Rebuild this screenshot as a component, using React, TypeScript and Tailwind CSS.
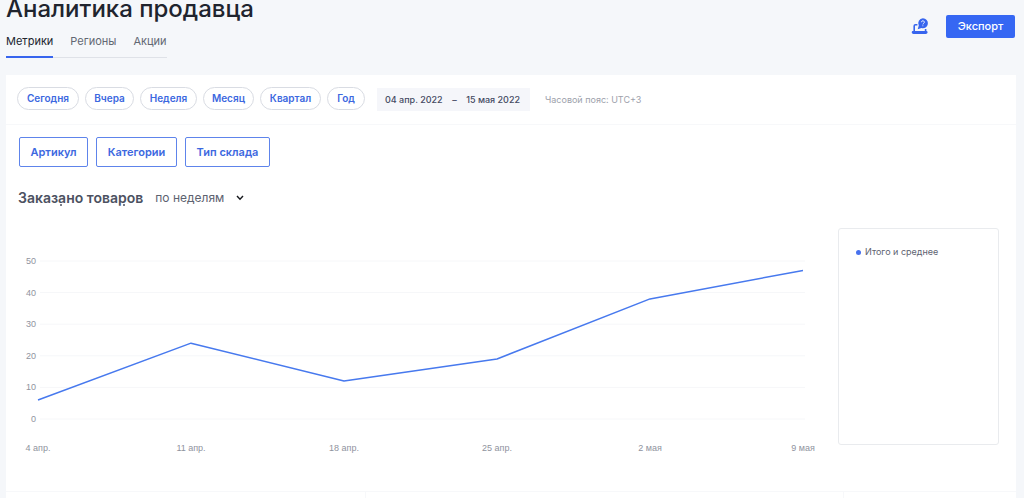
import React from "react";

const tabs = ["Метрики", "Регионы", "Акции"];
const periods = [
  { label: "Сегодня", width: "w-[62px]" },
  { label: "Вчера", width: "w-[49px]" },
  { label: "Неделя", width: "w-[57px]" },
  { label: "Месяц", width: "w-[51px]" },
  { label: "Квартал", width: "w-[61px]" },
  { label: "Год", width: "w-[38px]" },
];
const filters = [
  { label: "Артикул", width: "w-[69px]" },
  { label: "Категории", width: "w-[81px]" },
  { label: "Тип склада", width: "w-[85px]" },
];
const points = [
  { label: "4 апр.", value: 6 },
  { label: "11 апр.", value: 24 },
  { label: "18 апр.", value: 12 },
  { label: "25 апр.", value: 19 },
  { label: "2 мая", value: 38 },
  { label: "9 мая", value: 47 },
];
const ticks = [50, 40, 30, 20, 10, 0];

const xAt = (i: number) => 20 + i * 153;
const yAt = (v: number) => 191 - v * 3.16;

function OrdersChart() {
  return (
    <svg
      viewBox="0 0 802 230"
      className="block w-full font-['Liberation_Sans',sans-serif]"
      role="img"
      aria-label="Заказано товаров по неделям"
    >
      {ticks.map((t) => (
        <g key={t}>
          <line x1="22" x2="787" y1={yAt(t)} y2={yAt(t)} stroke="#f6f7f9" strokeWidth="1" />
          <text x="18" y={yAt(t) + 3} textAnchor="end" fontSize="9" fill="#8f939e">
            {t}
          </text>
        </g>
      ))}
      <polyline
        points={points.map((p, i) => `${xAt(i)},${yAt(p.value)}`).join(" ")}
        fill="none"
        stroke="#4779ee"
        strokeWidth="1.5"
        strokeLinejoin="round"
      />
      {points.map((p, i) => (
        <text key={p.label} x={xAt(i)} y="223" textAnchor="middle" fontSize="9" fill="#8f939e">
          {p.label}
        </text>
      ))}
    </svg>
  );
}

function SupportIcon() {
  return (
    <svg viewBox="0 0 18 18" className="size-[18px]" fill="none" aria-hidden="true">
      <path d="M6.400 6.800H4.400Q3.200 6.800 3.200 8v5.500M14.600 11v3" stroke="#3765ee" strokeWidth="1.600" />
      <path d="M1.600 13h13.800q1.100 0 1.100 1v.3q0 1.700-1.700 1.700H2.400Q.8 16 .8 14.300V14q0-1 .8-1Z" fill="#3765ee" />
      <path d="M11.900.3a5 5 0 1 1-1.400 9.800L6.700 11.300l1.100-3.700A5 5 0 0 1 11.900.3Z" fill="#3765ee" />
      <path d="M10.500 4.200a1.400 1.400 0 1 1 2.100 1.200q-.7.4-.7 1" stroke="#fff" strokeWidth=".9" />
      <circle cx="11.900" cy="7.700" r=".5" fill="#fff" />
    </svg>
  );
}

export default function App() {
  return (
    <div className="min-h-screen overflow-hidden bg-[#f5f7fa] px-1.5 font-['Inter','Liberation_Sans',sans-serif] text-[#20242e]">
      <header className="flex h-[75px] items-start justify-between pr-[3px]">
        <div>
          <h1 className="text-2xl font-medium leading-[18px]">Аналитика продавца</h1>
          <nav className="mt-3 flex w-fit gap-[17px] border-b border-[#dfe2e8] text-[11px] leading-4">
            {tabs.map((tab, i) => (
              <a
                key={tab}
                href="#"
                aria-current={i === 0 ? "page" : undefined}
                className={
                  i === 0
                    ? "-mb-px border-b-2 border-[#3765ee] pb-[7px] pt-[3px] text-[#20242e]"
                    : "pb-2 pt-[3px] text-[#626773]"
                }
              >
                {tab}
              </a>
            ))}
          </nav>
        </div>
        <div className="flex items-center gap-[17px] pt-[15px]">
          <button aria-label="Помощь">
            <SupportIcon />
          </button>
          <button className="h-[23px] w-[69px] rounded-[2px] bg-[#3667f3] text-[11px] font-medium text-white">
            Экспорт
          </button>
        </div>
      </header>

      <main className="mr-0.5 bg-white">
        <section className="flex h-[50px] items-center border-b border-[#f7f8fa] pl-[11px]">
          <div className="flex gap-1.5 pb-0.5">
            {periods.map((p) => (
              <button
                key={p.label}
                className={`${p.width} h-[23px] rounded-full border border-[#d9dce3] text-[10px] font-semibold text-[#3c68e0]`}
              >
                {p.label}
              </button>
            ))}
          </div>
          <button className="ml-3 flex h-[23px] w-[153px] items-center justify-between bg-[#f5f6fa] pl-2 pr-2.5 text-[9px] font-medium text-[#444a62]">
            <span>04 апр. 2022</span>
            <span>–</span>
            <span>15 мая 2022</span>
          </button>
          <span className="ml-[15px] text-[9px] text-[#9da1ab]">Часовой пояс: UTC+3</span>
        </section>

        <section className="flex gap-2 pl-[13px] pt-3">
          {filters.map((f) => (
            <button
              key={f.label}
              className={`${f.width} h-[30px] rounded-[2px] border border-[#5e84eb] text-[11px] font-semibold text-[#3c68e0]`}
            >
              {f.label}
            </button>
          ))}
        </section>

        <section className="flex h-[61px] items-center pl-3">
          <h2 className="relative text-sm font-semibold leading-4 text-[#4c5161]">
            Заказано товаров
            <i className="absolute bottom-0 left-[42px] size-0.5 rounded-full bg-[#4c5161]" />
            <i className="absolute bottom-0 left-[105px] size-0.5 rounded-full bg-[#4c5161]" />
          </h2>
          <div className="relative ml-3 flex items-center">
            <select
              aria-label="Группировка"
              className="w-[91px] appearance-none bg-transparent text-xs text-[#5d6270]"
              defaultValue="weeks"
            >
              <option value="weeks">по неделям</option>
              <option value="days">по дням</option>
            </select>
            <svg viewBox="0 0 8 6" className="pointer-events-none absolute right-0.5 h-1.5 w-2" fill="none" aria-hidden="true">
              <path d="m1 1 3 3.300L7 1" stroke="#16181d" strokeWidth="1.400" />
            </svg>
          </div>
        </section>

        <section className="flex items-start pl-3 pr-[17px]">
          <div className="min-w-0 flex-1">
            <OrdersChart />
          </div>
          <aside className="ml-[18px] h-[217px] w-[161px] rounded-[3px] border border-[#e9ebee] pl-[17px] pt-[17px]">
            <div className="flex items-center gap-1 text-[9px] leading-3 text-[#5d6270]">
              <span className="size-[5px] rounded-full bg-[#4771ee]" />
              Итого и среднее
            </div>
          </aside>
        </section>

        <section className="mt-[33px] grid h-[30px] grid-cols-[360px_1fr_172px] border-t border-[#f7f8fa]">
          <div className="border-r border-[#f7f8fa]" />
          <div className="border-r border-[#f7f8fa]" />
          <div />
        </section>
      </main>
    </div>
  );
}
